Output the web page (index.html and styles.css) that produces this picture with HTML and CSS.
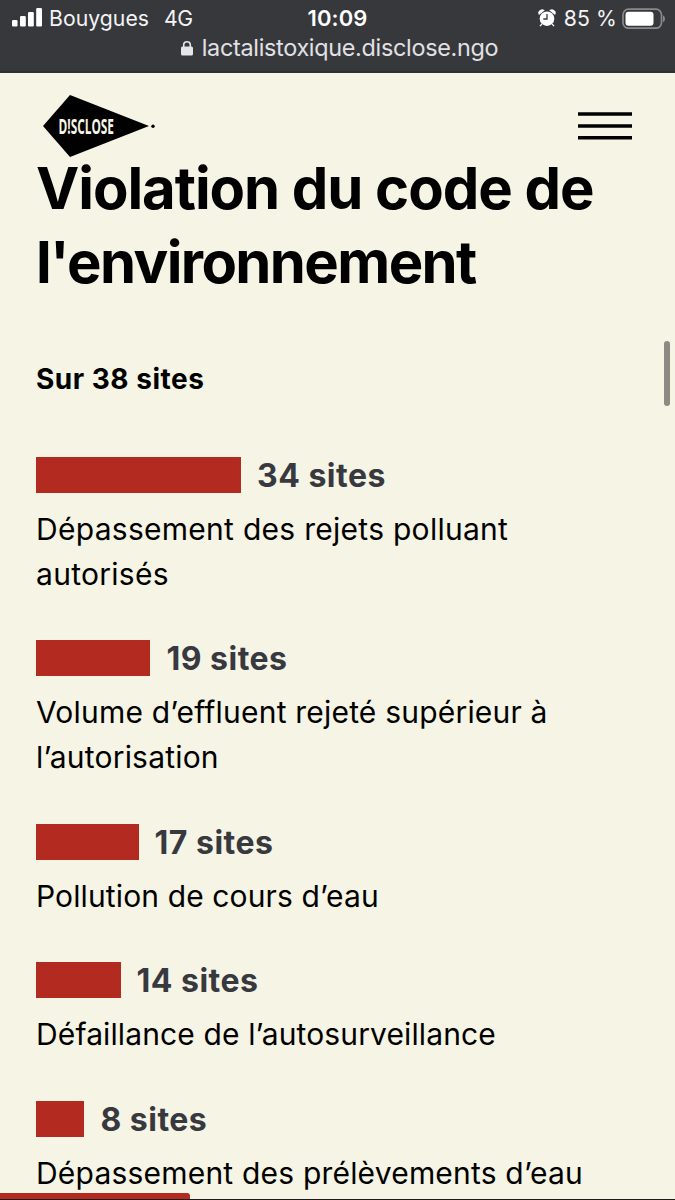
FILE: index.html
```html
<!DOCTYPE html>
<html lang="fr">
<head>
<meta charset="utf-8">
<title>Violation du code de l'environnement</title>
<link rel="stylesheet" href="styles.css">
</head>
<body>
<div class="screen">
  <header class="browser">
    <div class="status">
      <div class="carrier">
        <svg class="signal" width="31" height="20" viewBox="0 0 31 20" fill="#fff"><rect x="0" y="13" width="5.5" height="6.5" rx="1.3"/><rect x="8" y="9" width="5.8" height="10.5" rx="1.3"/><rect x="16" y="5" width="5.8" height="14.5" rx="1.3"/><rect x="24.2" y="1" width="5.8" height="18.5" rx="1.3"/></svg>
        <span class="operator">Bouygues</span>
        <span class="network">4G</span>
      </div>
      <span class="clock">10:09</span>
      <div class="power">
        <svg class="alarm" width="18" height="19" viewBox="0 0 18 19"><circle cx="9" cy="9.7" r="7.3" fill="#fff"/><path d="M1.2 5Q.2 2.6 2.4 1.5Q4 .6 5.6 1.4ZM12.4 1.4Q14 .6 15.6 1.5Q17.8 2.6 16.8 5ZM4 14.8L2 17.2M14 14.8L16 17.2" fill="#fff" stroke="#fff" stroke-width="1.3"/><path d="M9 5V10H5.3" fill="none" stroke="#37383c" stroke-width="1.3"/></svg>
        <span class="percent">85 %</span>
        <svg class="battery" width="44" height="22" viewBox="0 0 44 22"><rect x="1" y="1.2" width="38.5" height="19" rx="5.5" fill="none" stroke="#88898c" stroke-width="1.7"/><rect x="3.5" y="3.8" width="28" height="14" rx="3" fill="#fff"/><path d="M41 7.2Q43 8.2 43 10.7T41 14.2Z" fill="#88898c"/></svg>
      </div>
    </div>
    <div class="address">
      <svg class="lock" width="12" height="15" viewBox="0 0 12 15"><rect x="0" y="5.5" width="12" height="9" rx="1.6" fill="#e6e6e9"/><path d="M2.7 7V4.1a3.3 3.3 0 0 1 6.6 0V7" fill="none" stroke="#e6e6e9" stroke-width="1.6"/></svg>
      <span class="url">lactalistoxique.disclose.ngo</span>
    </div>
  </header>
  <nav class="topbar">
    <svg class="logo" width="114" height="64" viewBox="0 0 114 64"><path d="M0 32L27 1L106 32L27 63Z"/><circle cx="110" cy="32.3" r="1.7"/><text class="logo-text" x="15.5" y="40" textLength="55.5" lengthAdjust="spacingAndGlyphs">D!SCLOSE</text></svg>
    <svg class="menu" width="54" height="28" viewBox="0 0 54 28"><path d="M0 2H54M0 14H54M0 25.8H54" stroke="#000" stroke-width="3.6"/></svg>
  </nav>
  <main class="content">
    <h1 class="title">Violation du code de<br><span class="title-end">l'environnement</span></h1>
    <p class="subtitle">Sur 38 sites</p>
    <ul class="chart">
      <li class="item"><div class="row"><span class="bar" style="width:205px"></span><span class="count">34 sites</span></div><p class="label loose">Dépassement des rejets polluant<br>autorisés</p></li>
      <li class="item"><div class="row"><span class="bar" style="width:114.4px"></span><span class="count">19 sites</span></div><p class="label">Volume d’effluent rejeté supérieur à<br>l’autorisation</p></li>
      <li class="item"><div class="row"><span class="bar" style="width:102.5px"></span><span class="count">17 sites</span></div><p class="label tight">Pollution de cours d’eau</p></li>
      <li class="item"><div class="row"><span class="bar" style="width:84.5px"></span><span class="count">14 sites</span></div><p class="label tight">Défaillance de l’autosurveillance</p></li>
      <li class="item"><div class="row"><span class="bar" style="width:48.4px"></span><span class="count">8 sites</span></div><p class="label">Dépassement des prélèvements d’eau</p></li>
    </ul>
  </main>
  <div class="scrollbar"></div>
  <div class="progress"><div class="progress-fill"></div></div>
</div>
</body>
</html>
```
FILE: styles.css
```css
* { box-sizing: border-box; }
body { margin: 0; background: #f6f4e5; font-family: Inter, sans-serif; color: #000; }
.screen { position: relative; width: 675px; height: 1200px; overflow: hidden; background: #f6f4e5; }
.browser { height: 73px; background: #37383c; border-bottom: 2px solid #2e2f31; color: #f4f4f5; }
.status { display: grid; grid-template-columns: 1fr auto 1fr; align-items: center; height: 37px; padding: 0 10px 0 12px; }
.carrier, .power { display: flex; align-items: center; }
.power { justify-content: flex-end; }
.signal { margin: 0 6px 3px 0; }
.operator, .network, .percent { font-size: 21.2px; line-height: 37px; white-space: nowrap; }
.network { margin-left: 15px; letter-spacing: -.4px; }
.operator { letter-spacing: .05px; }
.clock { font-size: 22px; font-weight: 600; line-height: 37px; color: #fff; letter-spacing: .1px; margin-left: -2px; }
.alarm { margin-right: 8px; }
.percent { margin-right: 5px; letter-spacing: .1px; }
.battery { flex: none; margin-right: -1px; }
.address { display: flex; align-items: center; justify-content: center; gap: 9px; height: 22px; padding-left: 4px; color: #e1e1e5; }
.lock { flex: none; }
.url { font-size: 23.4px; line-height: 22px; letter-spacing: -.3px; }
.topbar { display: flex; justify-content: space-between; align-items: flex-start; height: 79px; padding: 21px 43px 0; }
.menu { margin: 18px 0 0; }
.logo-text { font-family: "Open Sans", sans-serif; font-size: 22px; font-weight: 700; fill: #f6f4e5; }
.content { padding: 0 36px; }
.title { margin: 0; font-size: 58px; line-height: 73.5px; font-weight: 700; letter-spacing: -1.05px; white-space: nowrap; }
.title-end { letter-spacing: -1.6px; }
.subtitle { margin: 59px 0 0; font-size: 28px; line-height: 42px; font-weight: 700; letter-spacing: .5px; }
.chart { list-style: none; margin: 57px 0 0; padding: 0; display: flex; flex-direction: column; gap: 43.6px; }
.row { display: flex; align-items: center; gap: 16px; height: 36px; }
.bar { height: 36px; background: #b22a20; }
.count { font-size: 32px; line-height: 36px; padding-top: 2px; font-weight: 700; letter-spacing: .5px; color: #37393f; }
.label { margin: 13.9px 0 0; font-size: 30px; line-height: 45px; letter-spacing: .2px; white-space: nowrap; }
.label.loose { letter-spacing: .28px; }
.label.tight { letter-spacing: .12px; }
.scrollbar { position: absolute; left: 664px; top: 341px; width: 6px; height: 65px; border-radius: 3px; background: #8c8a83; }
.progress { position: absolute; left: 0; bottom: 0; width: 675px; height: 7px; border-bottom: 1px solid #1c1b1a; }
.progress-fill { width: 190px; height: 6px; border-top-right-radius: 3px; background: #b22a20; }
```
